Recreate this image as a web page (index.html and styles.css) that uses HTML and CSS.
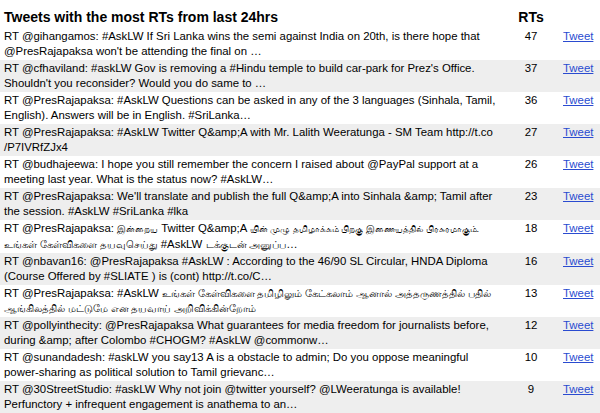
FILE: index.html
```html
<!DOCTYPE html>
<html>
<head>
<meta charset="utf-8">
<title>Tweets with the most RTs</title>
<link rel="stylesheet" href="styles.css">
</head>
<body>
<table class="rts">
  <thead>
    <tr class="head">
      <th class="title">Tweets with the most RTs from last 24hrs</th>
      <th class="count">RTs</th>
      <th class="act"></th>
    </tr>
  </thead>
  <tbody>
    <tr><td class="text">RT @gihangamos: #AskLW If Sri Lanka wins the semi against India on 20th, is there hope that @PresRajapaksa won't be attending the final on …</td><td class="count">47</td><td class="act"><a href="#">Tweet</a></td></tr>
    <tr class="alt"><td class="text">RT @cfhaviland: #askLW Gov is removing a #Hindu temple to build car-park for Prez's Office. Shouldn't you reconsider? Would you do same to …</td><td class="count">37</td><td class="act"><a href="#">Tweet</a></td></tr>
    <tr><td class="text">RT @PresRajapaksa: #AskLW Questions can be asked in any of the 3 languages (Sinhala, Tamil, English). Answers will be in English. #SriLanka…</td><td class="count">36</td><td class="act"><a href="#">Tweet</a></td></tr>
    <tr class="alt"><td class="text">RT @PresRajapaksa: #AskLW Twitter Q&amp;amp;A with Mr. Lalith Weeratunga - SM Team http://t.co<wbr>/P7IVRfZJx4</td><td class="count">27</td><td class="act"><a href="#">Tweet</a></td></tr>
    <tr><td class="text">RT @budhajeewa: I hope you still remember the concern I raised about @PayPal support at a meeting last year. What is the status now? #AskLW…</td><td class="count">26</td><td class="act"><a href="#">Tweet</a></td></tr>
    <tr class="alt"><td class="text">RT @PresRajapaksa: We'll translate and publish the full Q&amp;amp;A into Sinhala &amp;amp; Tamil after the session. #AskLW #SriLanka #lka</td><td class="count">23</td><td class="act"><a href="#">Tweet</a></td></tr>
    <tr><td class="text">RT @PresRajapaksa: <span class="ta ta-tight" lang="ta">இன்றைய</span> Twitter Q&amp;amp;A <span class="ta ta-tight" lang="ta">யின் முழு தமிழாக்கம் பிறகு இணையத்தில் பிரசுரமாகும்.</span> <span class="ta" lang="ta">உங்கள் கேள்விகளை தயவுசெய்து</span> #AskLW <span class="ta" lang="ta">டக்குடன் அனுப்ப</span>…</td><td class="count">18</td><td class="act"><a href="#">Tweet</a></td></tr>
    <tr class="alt"><td class="text">RT @nbavan16: @PresRajapaksa #AskLW : According to the 46/90 SL Circular, HNDA Diploma (Course Offered by #SLIATE ) is (cont) http://t.co/C…</td><td class="count">16</td><td class="act"><a href="#">Tweet</a></td></tr>
    <tr><td class="text">RT @PresRajapaksa: #AskLW <span class="ta" lang="ta">உங்கள் கேள்விகளை தமிழிலும் கேட்கலாம் ஆனால் அத்தருணத்தில் பதில் ஆங்கிலத்தில் மட்டுமே என தயவாய் அறிவிக்கின்றோம்</span></td><td class="count">13</td><td class="act"><a href="#">Tweet</a></td></tr>
    <tr class="alt"><td class="text">RT @pollyinthecity: @PresRajapaksa What guarantees for media freedom for journalists before, during &amp;amp; after Colombo #CHOGM? #AskLW @commonw…</td><td class="count">12</td><td class="act"><a href="#">Tweet</a></td></tr>
    <tr><td class="text">RT @sunandadesh: #askLW you say13 A is a obstacle to admin; Do you oppose meaningful power-sharing as political solution to Tamil grievanc…</td><td class="count">10</td><td class="act"><a href="#">Tweet</a></td></tr>
    <tr class="alt"><td class="text">RT @30StreetStudio: #askLW Why not join @twitter yourself? @LWeeratunga is available! Perfunctory + infrequent engagement is anathema to an…</td><td class="count">9</td><td class="act"><a href="#">Tweet</a></td></tr>
  </tbody>
</table>
</body>
</html>
```

FILE: styles.css
```css
html, body {
  margin: 0;
  padding: 0;
  background: #ffffff;
}

body {
  font-family: "Liberation Sans", Arial, "Noto Sans", sans-serif;
  font-size: 11.4px;
  color: #000000;
}

.rts {
  width: 600px;
  border-collapse: collapse;
  table-layout: fixed;
}

.rts th {
  font-size: 14px;
  font-weight: bold;
  line-height: 16px;
  padding: 9px 4px 3px;
  vertical-align: top;
}

.rts th.title {
  width: 494px;
  text-align: left;
}

.rts .count {
  width: 50px;
  text-align: center;
}

.rts .act {
  width: 40px;
}

.rts td {
  line-height: 15px;
  padding: 1px 4px;
  vertical-align: top;
}

.rts td.act {
  padding-left: 3px;
}

.rts tr.alt td {
  background: #eeeeee;
}

.rts .ta {
  font-size: 10.1px;
}

.rts .ta-tight {
  font-size: 9.1px;
}

.rts a {
  color: #2a4bd0;
  text-decoration: underline;
}
```
